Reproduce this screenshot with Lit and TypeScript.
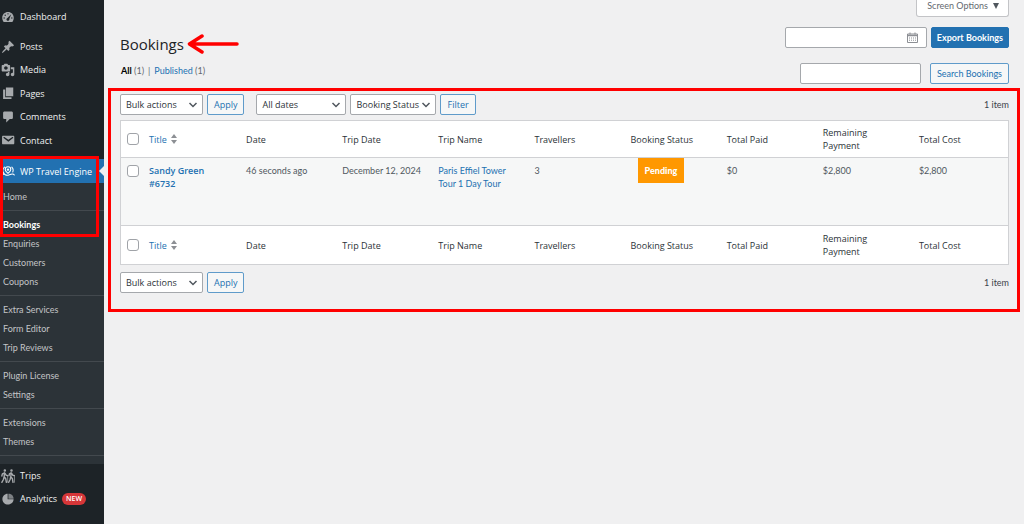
import { LitElement, html, css, svg, nothing } from "lit";
import { customElement, property } from "lit/decorators.js";

const icons: Record<string, unknown> = {
  dashboard: svg`<path fill-rule="evenodd" d="M3.8 17h12.4c1.4-1.6 2-3.8 2-6 0-4.500-3.600-8-8.200-8s-8.200 3.500-8.200 8c0 2.200.7 4.400 2 6zM9 5.500a1 1 0 1 1 2 0 1 1 0 0 1-2 0zM5 7.500a1 1 0 1 1 2 0 1 1 0 0 1-2 0zM3.500 11.500a1 1 0 1 1 2 0 1 1 0 0 1-2 0zM14.500 11.500a1 1 0 1 1 2 0 1 1 0 0 1-2 0zM14.600 6.200l-2.600 6.400c.3 2-1 2.900-2.200 2.900-1.300 0-2.200-1-2-2.200.1-.8.7-1.400 1.500-1.700z"/>`,
  post: svg`<path d="M10.44 3.02l1.82-1.82 6.36 6.35-1.83 1.82c-1.05-.68-2.48-.57-3.41.36l-.75.75c-.92.93-1.04 2.35-.35 3.41l-1.83 1.82-2.41-2.41-2.8 2.79c-.42.42-3.38 2.71-3.8 2.29s1.86-3.39 2.28-3.81l2.79-2.79L4.1 9.36l1.83-1.82c1.05.69 2.48.57 3.4-.36l.75-.75c.93-.92 1.05-2.35.36-3.41z"/>`,
  media: svg`<path fill-rule="evenodd" d="M13 11V4c0-.55-.45-1-1-1h-1.670L9 1H5L3.670 3H2c-.55 0-1 .45-1 1v7c0 .55.45 1 1 1h10c.55 0 1-.45 1-1zM7 4.500c1.380 0 2.500 1.120 2.500 2.500S8.380 9.500 7 9.500 4.500 8.380 4.500 7 5.620 4.500 7 4.500zM14 6h5v10.500c0 1.380-1.120 2.500-2.500 2.500S14 17.880 14 16.500s1.120-2.500 2.500-2.500c.17 0 .34.02.5.05V9h-3V6zm-4 8.050V13h2v3.500c0 1.380-1.120 2.500-2.500 2.500S7 17.880 7 16.500 8.120 14 9.500 14c.17 0 .34.02.5.05z"/>`,
  page: svg`<path d="M7 14.500V2h10.500v12.500H7zM6 16h9v2.500H3V5h3v11z"/>`,
  comment: svg`<path d="M5 2h10c1.100 0 2 .9 2 2v7c0 1.100-.9 2-2 2h-2.500l-5 5v-5H5c-1.100 0-2-.9-2-2V4c0-1.100.9-2 2-2z"/>`,
  mail: svg`<path d="M3 4h14.500C18.600 4 19 4.590 19 5.790v8.420c0 1.190-.4 1.790-1.500 1.790H3c-1.250 0-1.500-.6-1.500-1.790V5.790C1.500 4.590 2 4 3 4zm7.490 8.600l6.740-5.530c.24-.2.43-.66.13-1.070-.29-.41-.82-.42-1.170-.17l-5.700 3.860L4.800 5.830c-.35-.25-.88-.24-1.170.17-.3.41-.11.87.13 1.070z"/>`,
  travel: svg`<g fill="none" stroke="currentColor" stroke-width="1.500" stroke-linecap="round"><path d="M10 13.500C7.500 11.500 6 10 6 8a4 4 0 0 1 8 0c0 2-1.500 3.500-4 5.500z"/><circle cx="10" cy="8" r="1"/><path d="M5 4.500C2.500 6.500 2 9.500 3.200 12s4 4.300 7 4 4.800-1.800 6-1.800 2.300.6 2.800 1.600M15.500 4.500c1.800 1.800 2.300 4.500 1.300 7M1 15.500c1-.9 2-1.100 3.500-.8"/></g>`,
  trips: svg`<g fill="none" stroke="currentColor" stroke-width="2" stroke-linecap="round" stroke-linejoin="round"><circle cx="5.500" cy="2" r=".8"/><path d="M5 5.500L4.500 11l2.300 3 .9 5M4.500 11l-1 4-2.300 4M5 5.500L2 7l-.8 3M5.500 6l2 3 2 .5"/><circle cx="15" cy="2" r=".8"/><path d="M14.500 5.500L14 11l2.300 3 .9 5M14 11l-1 4-2 4M14.500 5.500L12 7l-.5 2.500M15 6l2 3 2 .5"/><path stroke-width="1" d="M9.500 9.500V19M19.200 9v10"/></g>`,
  chart: svg`<path d="M10.500 9.500V2.500c4.200 0 7.400 2.900 7.500 7h-7.500z" opacity=".7"/><path d="M9.500 2.500v8H18c0 4.200-3.600 7.500-8 7.500s-8-3.400-8-7.700 3.300-7.800 7.500-7.800z"/>`,
};

type Item = { icon: string; label: string; badge?: string };

@customElement("admin-menu")
class AdminMenu extends LitElement {
  static styles = css`
    :host { display: block; background: #1d2327; color: #f0f0f1; font-size: 9px; }
    ul { list-style: none; margin: 0; padding: 0; }
    a { color: inherit; text-decoration: none; white-space: nowrap; }
    .first { padding-top: 5px; }
    .content { display: grid; grid-auto-rows: 1fr; height: 117px; margin: 7px 0; }
    .item { display: flex; align-items: center; gap: 5px; height: 23px; padding-left: 1px; }
    .icon { width: 14px; height: 14px; fill: currentColor; color: #a7aaad; flex: none; }
    .badge { background: #d63638; border-radius: 8px; padding: 0 4px; font-size: 7px; line-height: 12px; font-weight: 600; color: #fff; }
    .current { position: relative; }
    .current > .item { position: relative; height: 24px; background: #2271b1; color: #fff; }
    .current > .item .icon { color: #fff; }
    .current > .item::after { content: ""; position: absolute; right: 0; top: 7px; border: 5px solid transparent; border-left: 0; border-right-color: #f0f0f1; }
    .sub { background: #2c3338; color: #c3c4c7; font-family: Lato, sans-serif; padding: 4px 0; }
    .sub a { display: block; padding-left: 3px; line-height: 19px; }
    .sub a.on { color: #fff; font-weight: 700; }
    .sep { height: 1px; margin: 4px 0; background: #43494e; }
    .mark { position: absolute; left: 0; right: 5px; top: -3px; height: 81px; box-sizing: border-box; border: 3px solid #f00; pointer-events: none; }
  `;

  item(i: Item) {
    return html`<a class="item" href="#"><svg class="icon" viewBox="0 0 20 20" aria-hidden="true">${icons[i.icon]}</svg>${i.label}${i.badge ? html`<span class="badge">${i.badge}</span>` : nothing}</a>`;
  }

  render() {
    const groups = [
      ["Home"],
      ["Bookings", "Enquiries", "Customers", "Coupons"],
      ["Extra Services", "Form Editor", "Trip Reviews"],
      ["Plugin License", "Settings"],
      ["Extensions", "Themes"],
    ];
    const content: Item[] = [
      { icon: "post", label: "Posts" },
      { icon: "media", label: "Media" },
      { icon: "page", label: "Pages" },
      { icon: "comment", label: "Comments" },
      { icon: "mail", label: "Contact" },
    ];
    return html`<nav aria-label="Main menu">
      <div class="first">${this.item({ icon: "dashboard", label: "Dashboard" })}</div>
      <ul class="content">${content.map((i) => html`<li>${this.item(i)}</li>`)}</ul>
      <div class="current">
        ${this.item({ icon: "travel", label: "WP Travel Engine" })}
        <div class="sub">
          ${groups.map((g) => html`${g.map((t) => html`<a href="#" class=${t === "Bookings" ? "on" : ""}>${t}</a>`)}<div class="sep"></div>`)}
        </div>
        <div class="mark"></div>
      </div>
      ${this.item({ icon: "trips", label: "Trips" })}
      ${this.item({ icon: "chart", label: "Analytics", badge: "NEW" })}
    </nav>`;
  }
}

const controls = css`
  button, select, input[type="text"], input[type="search"] { font: inherit; box-sizing: border-box; height: 21px; border-radius: 2px; margin: 0; }
  button { border: 1px solid #5f9bca; background: #f6f7f7; color: #2271b1; padding: 0 6px; white-space: nowrap; }
  button.primary { background: #2271b1; border-color: #2271b1; color: #fff; font-weight: 700; }
  select { appearance: none; border: 1px solid #a5a8ac; color: #2c3338; padding: 0 5px; background: #fff url('data:image/svg+xml;utf8,<svg xmlns="http://www.w3.org/2000/svg" viewBox="0 0 10 10"><path d="M1.500 3l3.500 3.500L8.500 3" fill="none" stroke="%2350575e" stroke-width="1.500"/></svg>') no-repeat right 4px center / 10px 10px; }
  input[type="text"], input[type="search"] { border: 1px solid #a5a8ac; background: #fff; padding: 0 6px; }
  input[type="checkbox"] { appearance: none; display: block; width: 12px; height: 12px; margin: 0; border: 1px solid #a0a3a8; border-radius: 3px; background: #fff; }
`;

@customElement("table-nav")
class TableNav extends LitElement {
  @property({ type: Boolean }) filters = false;
  static styles = [controls, css`
    :host { display: flex; align-items: center; gap: 4px; }
    .bulk { width: 83px; }
    .dates { width: 90px; margin-left: 8px; }
    .status { width: 86px; }
    .count { margin-left: auto; font-family: Lato, sans-serif; }
  `];
  render() {
    return html`
      <select class="bulk" aria-label="Bulk actions"><option>Bulk actions</option></select>
      <button>Apply</button>
      ${this.filters ? html`
        <select class="dates" aria-label="Filter by date"><option>All dates</option></select>
        <select class="status" aria-label="Filter by booking status"><option>Booking Status</option></select>
        <button>Filter</button>` : nothing}
      <span class="count">1 item</span>`;
  }
}

@customElement("app-root")
class AppRoot extends LitElement {
  static styles = [controls, css`
    :host { display: grid; grid-template-columns: 104px minmax(0, 1fr); min-height: 100vh; background: #f0f0f1; color: #3c434a; font: 9px/13px "Open Sans", "Noto Sans", sans-serif; }
    a { color: #2271b1; text-decoration: none; }
    main { padding: 0 15px 0 16px; }
    .screen { display: flex; align-items: center; gap: 5px; margin: 0 0 10px auto; height: 17px; border: 1px solid #c3c4c7; border-top: 0; border-radius: 0 0 3px 3px; background: #fff; color: #646970; font-family: Lato, sans-serif; line-height: 12px; padding: 0 9px 4px 10px; }
    .screen svg { width: 6px; height: 6px; fill: #50575e; }
    .head { display: flex; justify-content: space-between; }
    .titles { padding-top: 7px; }
    .title { display: flex; align-items: center; gap: 3px; }
    h1 { margin: 0; font-size: 15px; line-height: 20px; font-weight: 400; color: #1d2327; }
    .arrow { width: 52px; height: 20px; }
    .views { display: flex; gap: 4px; margin-top: 10px; padding-left: 1px; font-family: Lato, sans-serif; line-height: 14px; color: #646970; }
    .views b { color: #000; }
    .tools { display: grid; gap: 15px; font-family: Lato, sans-serif; }
    .tools .primary { padding: 0 5px; }
    .tool { display: flex; justify-content: flex-end; gap: 4px; }
    .tool + .tool { gap: 9px; }
    .date { position: relative; display: flex; }
    .date input { width: 142px; }
    .date svg { position: absolute; right: 9px; top: 5px; width: 11px; height: 11px; }
    .tool input[type="search"] { width: 121px; }
    .listing { position: relative; margin-top: 10px; }
    .mark { position: absolute; inset: -6px -11px -19px -12px; border: 3px solid #f00; pointer-events: none; }
    table { width: 100%; margin: 5px 0 7px; table-layout: fixed; border-collapse: separate; border-spacing: 0; border: 1px solid #d0d1d4; background: #fff; }
    th, td { text-align: left; font-weight: 400; padding: 0 7px; box-sizing: border-box; }
    th { color: #2c3338; }
    thead th { height: 37px; border-bottom: 1px solid #d0d1d4; }
    tfoot th { height: 39px; border-top: 1px solid #d0d1d4; }
    td { height: 67px; vertical-align: top; padding-top: 6px; background: #f6f7f7; color: #50575e; font-family: Lato, sans-serif; }
    .check { width: 22px; padding-right: 0; padding-left: 6px; }
    td.check { padding-top: 7px; }
    .check + * { padding-left: 6px; font-family: inherit; }
    .sort { display: inline-flex; align-items: center; gap: 4px; }
    .sort svg { width: 6px; height: 10px; fill: #8c8f94; }
    .name { font-weight: 600; }
    .status { background: #ff9800; color: #fff; font-weight: 900; padding: 7px; margin-left: 7px; }
  `];

  headings() {
    const cols = ["Date", "Trip Date", "Trip Name", "Travellers", "Booking Status", "Total Paid", "Remaining Payment", "Total Cost"];
    return html`<tr>
      <th class="check"><input type="checkbox" aria-label="Select all"></th>
      <th scope="col"><a class="sort" href="#">Title <svg viewBox="0 0 6 10" aria-hidden="true"><path d="M3 0l3 4H0zM3 10L0 6h6z"/></svg></a></th>
      ${cols.map((c) => html`<th scope="col">${c}</th>`)}
    </tr>`;
  }

  render() {
    return html`
      <admin-menu></admin-menu>
      <main>
        <button class="screen">Screen Options<svg viewBox="0 0 6 6" aria-hidden="true"><path d="M0 0h6L3 6z"/></svg></button>
        <header class="head">
          <div class="titles">
            <div class="title">
              <h1>Bookings</h1>
              <svg class="arrow" viewBox="0 0 52 20" fill="none" stroke="#f00" stroke-width="3.500" stroke-linecap="round" stroke-linejoin="round" aria-hidden="true"><path d="M50 10H3M15 2L2.500 10 15 18"/></svg>
            </div>
            <div class="views"><span><b>All</b> (1)</span><span>|</span><span><a href="#">Published</a> (1)</span></div>
          </div>
          <div class="tools">
            <div class="tool">
              <div class="date">
                <input type="text" aria-label="Date range">
                <svg viewBox="0 0 11 11" fill="none" stroke="#8c8f94" aria-hidden="true"><path d="M.5 2h10v8.500H.5z"/><path d="M.5 3.500h10" stroke-width="1.500"/><path d="M3 .5v2M8 .5v2"/><path d="M2 6h7M2 8.200h7" stroke-dasharray="1 1"/></svg>
              </div>
              <button class="primary">Export Bookings</button>
            </div>
            <div class="tool">
              <input type="search" aria-label="Search Bookings">
              <button>Search Bookings</button>
            </div>
          </div>
        </header>
        <section class="listing">
          <table-nav filters></table-nav>
          <table>
            <thead>${this.headings()}</thead>
            <tbody>
              <tr>
                <td class="check"><input type="checkbox" aria-label="Select Sandy Green #6732"></td>
                <td><a class="name" href="#">Sandy Green #6732</a></td>
                <td>46 seconds ago</td>
                <td>December 12, 2024</td>
                <td><a href="#">Paris Effiel Tower Tour 1 Day Tour</a></td>
                <td>3</td>
                <td><span class="status">Pending</span></td>
                <td>$0</td>
                <td>$2,800</td>
                <td>$2,800</td>
              </tr>
            </tbody>
            <tfoot>${this.headings()}</tfoot>
          </table>
          <table-nav></table-nav>
          <div class="mark"></div>
        </section>
      </main>`;
  }
}
